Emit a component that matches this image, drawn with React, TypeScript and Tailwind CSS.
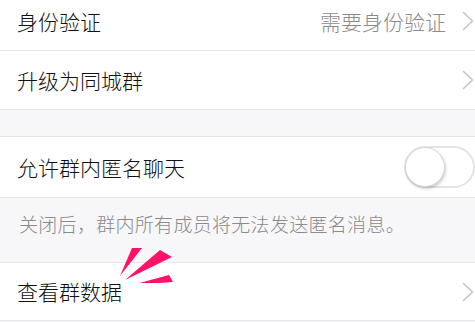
import React from "react";

const Chevron = () => (
  <svg width="12" height="20" viewBox="0 0 12 20" className="shrink-0">
    <path d="M1.5 1.5 L10.5 10 L1.5 18.5" fill="none" stroke="#c4c4c8" strokeWidth="1.5" strokeLinecap="round" strokeLinejoin="round" />
  </svg>
);

const Row = ({ label, value, chevron, className }: { label: string; value?: string; chevron?: boolean; className?: string }) => (
  <div className={"flex items-center bg-white border-b border-[#e6e6e8] pl-[17px] pr-[1px] " + (className ?? "")}>
    <span className="flex-1 text-[21px] leading-none font-light text-[#111]">{label}</span>
    {value && <span className="text-[21px] leading-none font-light text-[#8a8a8a] mr-[16px]">{value}</span>}
    {chevron && <Chevron />}
  </div>
);

export default function App() {
  return (
    <div
      className="w-[475px] h-[322px] overflow-hidden bg-[#f7f7f9]"
      style={{ fontFamily: '"Noto Sans CJK SC", "Noto Sans", sans-serif' }}
    >
      <Row label="身份验证" value="需要身份验证" chevron className="-mt-[8px] h-[59px]" />
      <Row label="升级为同城群" chevron className="h-[59px]" />
      <div className="h-[26px]" />
      <div className="flex items-center bg-white border-y border-[#e6e6e8] pl-[17px] h-[62px]">
        <span className="flex-1 text-[21px] leading-none font-light text-[#111]">允许群内匿名聊天</span>
        <div className="flex items-center w-[71px] h-[42px] rounded-full border-[2px] border-[#e4e4e6] bg-white">
          <div className="w-[40px] h-[40px] -ml-[1px] rounded-full bg-white border border-[#d6d6d8] shadow-[1px_2px_3px_rgba(0,0,0,0.18)]" />
        </div>
      </div>
      <div className="h-[65px] pl-[19px] pt-[15px] border-b border-[#e6e6e8]">
        <span className="text-[19px] leading-none font-light tracking-[0.3px] text-[#8a8a8a]">关闭后，群内所有成员将无法发送匿名消息。</span>
      </div>
      <div className="relative">
        <Row label="查看群数据" chevron className="h-[58px]" />
        <svg className="absolute left-0 pointer-events-none" width="200" height="40" viewBox="0 -20 200 40" style={{ top: -20 }}>
          <polygon points="120,13 132,-15 142,-15" fill="#ff1268" />
          <polygon points="125,17 160,-13 172,-6" fill="#ff1268" />
          <polygon points="132,22 169,12 173,19" fill="#ff1268" />
        </svg>
      </div>
    </div>
  );
}
